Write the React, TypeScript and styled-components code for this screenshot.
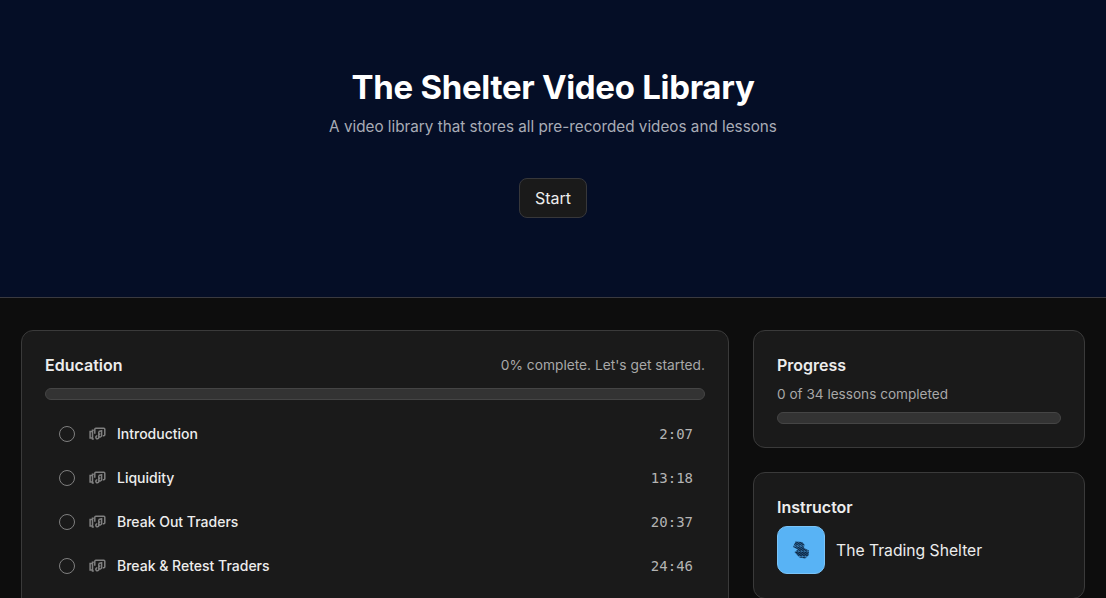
import styled, { createGlobalStyle } from 'styled-components'

interface Lesson {
  title: string
  duration: string
}

const lessons: Lesson[] = [
  { title: 'Introduction', duration: '2:07' },
  { title: 'Liquidity', duration: '13:18' },
  { title: 'Break Out Traders', duration: '20:37' },
  { title: 'Break & Retest Traders', duration: '24:46' },
]

const GlobalStyle = createGlobalStyle`
  html, body {
    margin: 0;
    height: 598px;
    overflow: hidden;
    background: #0d0d0d;
    font-family: Inter, "Liberation Sans", sans-serif;
  }
  * { box-sizing: border-box; }
`

const Hero = styled.header`
  height: 298px;
  padding-top: 68px;
  background: #050e26;
  border-bottom: 1px solid #3a3a40;
  display: flex;
  flex-direction: column;
  align-items: center;
`

const Title = styled.h1`
  margin: 0;
  font-size: 33px;
  line-height: 38px;
  font-weight: 700;
  letter-spacing: -0.3px;
  color: #fff;
`

const Subtitle = styled.p`
  margin: 11px 0 0;
  font-size: 15.25px;
  line-height: 20px;
  color: #a9acb6;
`

const StartButton = styled.button`
  margin-top: 41px;
  width: 68px;
  height: 40px;
  border: 1px solid #37373a;
  border-radius: 8px;
  background: #1a1a1a;
  color: #ededed;
  font: 400 16px Inter, sans-serif;
`

const Main = styled.main`
  display: grid;
  grid-template-columns: 708px 332px;
  gap: 24px;
  padding: 32px 21px 0;
  align-items: start;
`

const Side = styled.aside`
  display: flex;
  flex-direction: column;
  gap: 24px;
`

const Card = styled.section`
  background: #1a1a1a;
  border: 1px solid #3a3a3a;
  border-radius: 12px;
  padding: 24px 23px;
`

const CourseCard = styled(Card)`
  height: 400px;
`

const ProgressCard = styled(Card)`
  padding-bottom: 23px;
`

const CardHead = styled.div`
  display: flex;
  justify-content: space-between;
  align-items: center;
  height: 20px;
`

const CardTitle = styled.h2`
  margin: 0;
  font-size: 16px;
  line-height: 20px;
  font-weight: 600;
  color: #ededed;
`

const Muted = styled.span`
  font-size: 13.75px;
  line-height: 20px;
  color: #a8a8a8;
`

const Track = styled.div<{ $top: number }>`
  height: 12px;
  margin-top: ${p => p.$top}px;
  background: #333;
  border: 1px solid #454545;
  border-radius: 6px;
`

const LessonList = styled.ul`
  list-style: none;
  margin: 12px 0 0;
  padding: 0;
`

const LessonRow = styled.li`
  height: 44px;
  padding: 0 12px 1px 14px;
  display: flex;
  align-items: center;
  font-size: 14px;
  font-weight: 450;
  color: #ededed;
`

const Radio = styled.span`
  width: 16px;
  height: 16px;
  flex: none;
  border: 1.75px solid #7f7f7f;
  border-radius: 50%;
  margin-right: 13px;
`

const LessonIcon = styled.svg`
  width: 18px;
  height: 18px;
  flex: none;
  margin-right: 11px;
  color: #808080;
`

const LessonTitle = styled.span`
  flex: 1;
`

const Duration = styled.span`
  font-family: "DejaVu Sans Mono", monospace;
  font-size: 14px;
  font-weight: 400;
  color: #b4b4b4;
`

const ProgressText = styled(Muted)`
  display: block;
  margin-top: 9px;
  font-size: 13.6px;
`

const Instructor = styled.div`
  display: flex;
  align-items: center;
  gap: 11px;
  margin-top: 9px;
  font-size: 15.7px;
  font-weight: 400;
  color: #ededed;
`

const Avatar = styled.div`
  width: 48px;
  height: 48px;
  border-radius: 10px;
  background: #58b3f5;
  border: 1px solid #79c3f7;
  display: flex;
  align-items: center;
  justify-content: center;
`

function VideoIcon() {
  return (
    <LessonIcon viewBox="0 0 18 18" fill="none" stroke="currentColor" strokeWidth="1.5">
      <path d="M3.800 6.500H2.100v6.400h1.700M5.800 5.200H4.500v8.800h1.300" />
      <path d="M6.800 8.800V4.200a1 1 0 0 1 1-1h8a1 1 0 0 1 1 1v5.600a1 1 0 0 1-1 1h-1" />
      <path d="M10.800 6.400v5.800a1.500 1.500 0 1 1-1.500-1.400M10.800 6.400l2.800 -.7v4.600a1.400 1.400 0 1 1-1.300-1.200" />
    </LessonIcon>
  )
}

function ShelterLogo() {
  const lines = [...Array(18)].map((_, i) => i * 1.5)
  return (
    <svg width="18" height="18" viewBox="0 0 18 18">
      <clipPath id="logo-shape">
        <path d="M3.500 .5 10 1 12.500 3.500 12 7 17 9.500 16.500 14.500 13 17.500 7.500 16.500 2.500 11 6 8.500 1 6Z" />
      </clipPath>
      <g clipPath="url(#logo-shape)" stroke="#0a2340" strokeWidth="1.05" strokeDasharray="6 0.6">
        {lines.map(x => (
          <line key={x} x1={x - 12} y1="0" x2={x + 2} y2="18" />
        ))}
      </g>
    </svg>
  )
}

export default function App() {
  return (
    <>
      <GlobalStyle />
      <Hero>
        <Title>The Shelter Video Library</Title>
        <Subtitle>A video library that stores all pre-recorded videos and lessons</Subtitle>
        <StartButton>Start</StartButton>
      </Hero>
      <Main>
        <CourseCard>
          <CardHead>
            <CardTitle>Education</CardTitle>
            <Muted>0% complete. Let's get started.</Muted>
          </CardHead>
          <Track $top={13} />
          <LessonList>
            {lessons.map(lesson => (
              <LessonRow key={lesson.title}>
                <Radio />
                <VideoIcon />
                <LessonTitle>{lesson.title}</LessonTitle>
                <Duration>{lesson.duration}</Duration>
              </LessonRow>
            ))}
          </LessonList>
        </CourseCard>
        <Side>
          <ProgressCard>
            <CardTitle>Progress</CardTitle>
            <ProgressText>0 of 34 lessons completed</ProgressText>
            <Track $top={8} />
          </ProgressCard>
          <Card>
            <CardTitle>Instructor</CardTitle>
            <Instructor>
              <Avatar>
                <ShelterLogo />
              </Avatar>
              The Trading Shelter
            </Instructor>
          </Card>
        </Side>
      </Main>
    </>
  )
}
